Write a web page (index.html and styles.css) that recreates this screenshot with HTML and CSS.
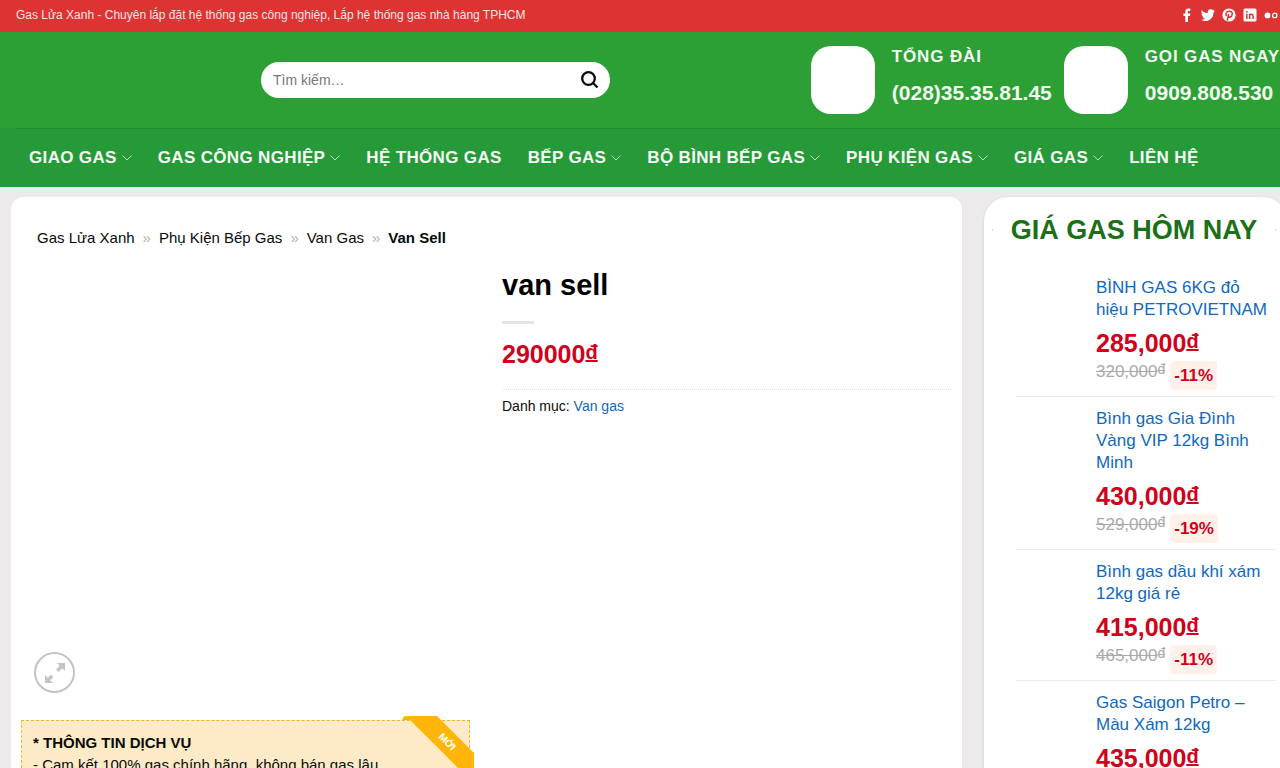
FILE: index.html
```html
<!DOCTYPE html>
<html lang="vi">
	<head>
		<meta charset="utf-8">
		<title>van sell - Gas Lửa Xanh</title>
		<meta name="viewport" content="width=device-width, initial-scale=1">
		<link rel="stylesheet" href="styles.css">
	</head>
	<body>
		<header>
			<div class="top-bar">
				<span>Gas Lửa Xanh - Chuyên lắp đặt hệ thống gas công nghiệp, Lắp hệ thống gas nhà hàng TPHCM</span>
				<div class="social">
					<a href="#" aria-label="Facebook"><svg viewBox="0 0 14 14"><path d="M5.300 14V8H3.400V5.400h1.900V3.600C5.300 1.500 6.400.5 8.300.5h2v2.400H9c-.8 0-1 .3-1 1v1.500h2.300L10 8H8v6z"/></svg></a>
					<a href="#" aria-label="Twitter"><svg viewBox="0 0 14 14"><path d="M14 2.900l-1.500 1.500C12.700 9.500 8.500 13 4.300 13 2.700 13 1.200 12.600 0 11.800c1.500.2 3-.3 4.100-1.100-1.200 0-2.200-.8-2.600-2h1.200C1.400 8.400.5 7.200.5 5.800l1.200.3C.4 5.200.1 3.600.8 2.200 2.200 3.900 4.400 5 6.800 5.100 6.200 2.900 7.900 1.200 9.700 1.200c.8 0 1.600.3 2.100.9l1.800-.7-1.200 1.700z"/></svg></a>
					<a href="#" aria-label="Pinterest"><svg viewBox="0 0 14 14"><circle cx="7" cy="7" r="6.600"/><path class="cut" d="M5.200 12.500L6.700 6M4.600 8.100C2.900 6.200 4.400 3.300 7.300 3.300c2.300 0 3.300 1.500 2.900 3.300-.5 2.600-3.100 3.200-4 1.700"/></svg></a>
					<a href="#" aria-label="LinkedIn"><svg viewBox="0 0 14 14"><rect x=".5" y=".5" width="13" height="13" rx="1.500"/><path class="cut" d="M3.900 5.700v5.300M3.900 3v1.500M6.700 11V5.700M6.700 8c0-2.200 3.400-2.200 3.400 0v3"/></svg></a>
					<a href="#" aria-label="Flickr"><svg viewBox="0 0 14 14"><circle cx="3.500" cy="7.400" r="2.900"/><circle class="ring" cx="10.700" cy="7.400" r="2.200"/></svg></a>
				</div>
			</div>
			<div class="header-main">
				<form class="search">
					<input type="search" placeholder="Tìm kiếm…" aria-label="Tìm kiếm">
					<button type="submit" aria-label="Tìm">
						<svg viewBox="0 0 18 18"><circle cx="7.500" cy="7.500" r="6.300"/><path d="M12 12l4.500 4.500"/></svg>
					</button>
				</form>
				<div class="hotlines">
					<div class="hotline">
						<div class="hotline-icon"></div>
						<div>
							<h4>Tổng đài</h4>
							<a href="tel:02835358145">(028)35.35.81.45</a>
						</div>
					</div>
					<div class="hotline">
						<div class="hotline-icon"></div>
						<div>
							<h4>Gọi gas ngay</h4>
							<a href="tel:0909808530">0909.808.530</a>
						</div>
					</div>
				</div>
			</div>
			<nav class="main-nav" aria-label="Menu chính">
				<ul>
					<li><a href="#">Giao gas<svg viewBox="0 0 10 6"><path d="M.5.5L5 5 9.500.5"/></svg></a></li>
					<li><a href="#">Gas công nghiệp<svg viewBox="0 0 10 6"><path d="M.5.5L5 5 9.500.5"/></svg></a></li>
					<li><a href="#">Hệ thống gas</a></li>
					<li><a href="#">Bếp gas<svg viewBox="0 0 10 6"><path d="M.5.5L5 5 9.500.5"/></svg></a></li>
					<li><a href="#">Bộ bình bếp gas<svg viewBox="0 0 10 6"><path d="M.5.5L5 5 9.500.5"/></svg></a></li>
					<li><a href="#">Phụ kiện gas<svg viewBox="0 0 10 6"><path d="M.5.5L5 5 9.500.5"/></svg></a></li>
					<li><a href="#">Giá gas<svg viewBox="0 0 10 6"><path d="M.5.5L5 5 9.500.5"/></svg></a></li>
					<li><a href="#">Liên hệ</a></li>
				</ul>
			</nav>
		</header>

		<div class="page">
			<main>
				<nav class="breadcrumb" aria-label="Breadcrumb">
					<a href="#">Gas Lửa Xanh</a>
					<span>»</span>
					<a href="#">Phụ Kiện Bếp Gas</a>
					<span>»</span>
					<a href="#">Van Gas</a>
					<span>»</span>
					<strong>Van Sell</strong>
				</nav>
				<div class="product">
					<div>
						<div class="gallery">
							<button class="zoom" type="button" aria-label="Phóng to">
								<svg viewBox="0 0 20 20"><path d="M12 0h8v8l-2.800-2.800-3.700 3.700-2.400-2.400 3.700-3.700zM0 12l2.800 2.800 3.200-3.200 2.400 2.400-3.200 3.200L8 20H0z"/></svg>
							</button>
						</div>
						<div class="service-info">
							<svg class="ribbon" viewBox="0 0 72 72"><path d="M0 4q1-4 4-4h31l37 37v31q0 3-4 4v-8L8 4z"/><text x="45" y="29" transform="rotate(45 45 26)">MỚI</text></svg>
							<strong>* THÔNG TIN DỊCH VỤ</strong>
							<p>- Cam kết 100% gas chính hãng, không bán gas lậu</p>
						</div>
					</div>
					<div class="summary">
						<h1>van sell</h1>
						<div class="divider"></div>
						<p class="price">290000<span>đ</span></p>
						<p class="meta">Danh mục: <a href="#">Van gas</a></p>
					</div>
				</div>
			</main>

			<aside>
				<h2>GIÁ GAS HÔM NAY</h2>
				<ul>
					<li>
						<a href="#">BÌNH GAS 6KG đỏ hiệu PETROVIETNAM</a>
						<p class="price">285,000<span>đ</span></p>
						<p class="discount"><del>320,000<span>đ</span></del><b>-11%</b></p>
					</li>
					<li>
						<a href="#">Bình gas Gia Đình Vàng VIP 12kg Bình Minh</a>
						<p class="price">430,000<span>đ</span></p>
						<p class="discount"><del>529,000<span>đ</span></del><b>-19%</b></p>
					</li>
					<li>
						<a href="#">Bình gas dầu khí xám 12kg giá rẻ</a>
						<p class="price">415,000<span>đ</span></p>
						<p class="discount"><del>465,000<span>đ</span></del><b>-11%</b></p>
					</li>
					<li>
						<a href="#">Gas Saigon Petro – Màu Xám 12kg</a>
						<p class="price">435,000<span>đ</span></p>
					</li>
				</ul>
			</aside>
		</div>
	</body>
</html>
```

FILE: styles.css
```css
* {
	box-sizing: border-box;
}
body {
	margin: 0;
	overflow-x: hidden;
	background: #eceaeb;
	color: #0a0a0a;
	font-family: "Liberation Sans", Arial, sans-serif;
	font-size: 15px;
	line-height: 22px;
}
body::-webkit-scrollbar {
	display: none;
}
h1, h2, h4, p, ul {
	margin: 0;
	padding: 0;
}
ul {
	list-style: none;
}
a {
	color: #1068bf;
	text-decoration: none;
}

/* header */
.top-bar {
	display: flex;
	justify-content: space-between;
	align-items: center;
	height: 32px;
	padding: 0 2px 2px 16px;
	background: #dd3333;
	color: #fbe3e3;
	font-size: 12px;
}
.social {
	display: flex;
	gap: 7px;
}
.social svg {
	display: block;
	width: 14px;
	height: 14px;
	fill: #fff;
}
.social .cut {
	fill: none;
	stroke: #dd3333;
	stroke-width: 1.5;
}
.social .ring {
	fill: none;
	stroke: #fff;
	stroke-width: 1.3;
}
.header-main {
	display: flex;
	justify-content: space-between;
	align-items: center;
	height: 96px;
	padding-left: 261px;
	background: #2ca034;
}
.search {
	display: flex;
	align-items: center;
	width: 349px;
	height: 36px;
	padding: 0 11px 0 12px;
	border-radius: 18px;
	background: #fff;
}
.search input {
	flex: 1;
	min-width: 0;
	padding: 0;
	border: 0;
	outline: 0;
	background: none;
	font: 14px "Liberation Sans", Arial, sans-serif;
}
.search input::placeholder {
	color: #777;
}
.search button {
	padding: 0;
	border: 0;
	background: none;
}
.search svg {
	display: block;
	width: 18px;
	height: 18px;
	fill: none;
	stroke: #0a0a0a;
	stroke-width: 2.3;
}
.hotlines {
	display: flex;
	gap: 12px;
	color: #f0faf0;
	white-space: nowrap;
}
.hotline {
	display: flex;
	align-items: flex-start;
	gap: 17px;
}
.hotline-icon {
	width: 64px;
	height: 68px;
	border-radius: 20px;
	background: #fff;
}
.hotline h4 {
	margin-bottom: 14px;
	font-size: 17px;
	line-height: 22px;
	letter-spacing: 0.05em;
	text-transform: uppercase;
}
.hotline a {
	display: block;
	color: #f0faf0;
	font-size: 21px;
	font-weight: bold;
}
.main-nav {
	padding-left: 16px;
	background: #269a38;
}
.main-nav ul {
	display: flex;
	gap: 26px;
	height: 59px;
	padding-left: 13px;
	border-top: 1px solid #238b33;
	white-space: nowrap;
}
.main-nav a {
	display: flex;
	align-items: center;
	gap: 5px;
	height: 58px;
	color: #f4fbf5;
	font-size: 17px;
	font-weight: bold;
	letter-spacing: 0.02em;
	text-transform: uppercase;
}
.main-nav svg {
	width: 10px;
	height: 6px;
	fill: none;
	stroke: #b4dcba;
}

/* content */
.page {
	display: grid;
	grid-template-columns: 1fr 303px;
	gap: 22px;
	margin: 10px -7px 0 11px;
}
main {
	padding: 30px 11px 40px 10px;
	border-radius: 12px;
	background: #fff;
}
.breadcrumb {
	display: flex;
	gap: 8px;
	margin-left: 16px;
}
.breadcrumb a {
	color: #0a0a0a;
}
.breadcrumb span {
	color: #b3b3b3;
}
.product {
	display: grid;
	grid-template-columns: 1fr 1fr;
	gap: 32px;
	margin-top: 18px;
}
.gallery {
	display: flex;
	align-items: flex-end;
	height: 426px;
	margin-bottom: 27px;
	padding-left: 13px;
}
.zoom {
	display: flex;
	align-items: center;
	justify-content: center;
	width: 41px;
	height: 41px;
	padding: 0;
	border: 2px solid #c4c4c4;
	border-radius: 50%;
	background: none;
}
.zoom svg {
	width: 20px;
	height: 20px;
	fill: #c4c4c4;
}
.service-info {
	position: relative;
	padding: 11px;
	border: 1px dashed #efb82c;
	background: #fdebc8;
}
.ribbon {
	position: absolute;
	top: -5px;
	right: -5px;
	width: 72px;
	height: 72px;
	fill: #feb60a;
}
.ribbon text {
	fill: #fff;
	font-size: 10px;
	font-weight: bold;
	text-anchor: middle;
}
.summary h1 {
	color: #000;
	font-size: 29px;
	line-height: 36px;
}
.divider {
	width: 32px;
	height: 3px;
	margin: 18px 0 13px;
	background: #e5e5e5;
}
.price {
	color: #d0021b;
	font-size: 25px;
	font-weight: bold;
	line-height: 34px;
}
.price span {
	font-size: 20px;
	line-height: 1;
	vertical-align: 4px;
	text-decoration: underline;
}
.summary .meta {
	margin-top: 18px;
	padding-top: 5px;
	border-top: 1px dotted #ddd;
	font-size: 14px;
}

/* price list */
aside {
	padding: 0 11px 0 32px;
	border-radius: 24px;
	background: #fff;
	box-shadow: 0 1px 3px rgba(0, 0, 0, 0.15);
}
aside h2 {
	display: flex;
	align-items: center;
	justify-content: space-between;
	margin: 17px 0 20px -24px;
	color: #1b7018;
	font-size: 27px;
	line-height: 32px;
	white-space: nowrap;
}
aside h2::before,
aside h2::after {
	content: "";
	width: 1px;
	height: 2px;
	background: #ddd;
}
aside li {
	padding: 11px 0 6px 80px;
	border-bottom: 1px solid #ececec;
	font-size: 17px;
}
aside li a {
	display: block;
}
aside .price {
	margin: 5px 0 1px;
}
.discount {
	display: flex;
	align-items: flex-start;
	gap: 5px;
	color: #aaa;
}
.discount del span {
	font-size: 14px;
	vertical-align: 3px;
	line-height: 1;
}
.discount b {
	padding: 0 4px;
	border-radius: 4px;
	background: #fff0e9;
	color: #d0021b;
	line-height: 29px;
}
```
